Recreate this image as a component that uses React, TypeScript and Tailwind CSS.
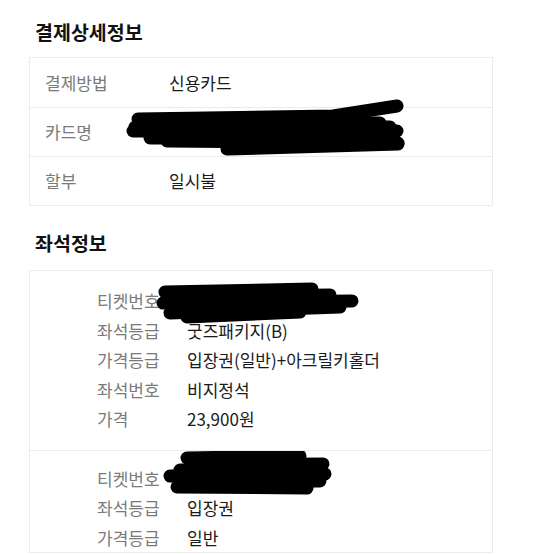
const font = { fontFamily: '"Noto Sans CJK KR", "Noto Sans", sans-serif' }

// 개인정보 가림 낙서 (좌표는 px 그대로)
function Scribble({ lines, className, w, h }: { lines: string[]; className: string; w: number; h: number }) {
  return (
    <svg className={`absolute pointer-events-none ${className}`} width={w} height={h} viewBox={`0 0 ${w} ${h}`}>
      {lines.map((d, i) => (
        <path key={i} d={d} stroke="#000" strokeWidth={13} strokeLinecap="round" strokeLinejoin="round" fill="none" />
      ))}
    </svg>
  )
}

const payRows = [
  { label: '결제방법', value: '신용카드' },
  { label: '카드명', value: '' },
  { label: '할부', value: '일시불' },
]

function TicketRow({ label, value }: { label: string; value: string }) {
  return (
    <div className="flex h-[29.5px] items-center">
      <span className="w-[90px] shrink-0 text-[#7a7a7a]">{label}</span>
      <span className="text-[#1a1a1a]">{value}</span>
    </div>
  )
}

export default function App() {
  return (
    <div className="w-[554px] h-[554px] overflow-hidden bg-white pl-[29px] text-[17px]" style={font}>
      {/* 결제상세정보 */}
      <h2 className="pl-[6px] pt-[18px] text-[19.5px] font-bold leading-[28px] text-[#111]">결제상세정보</h2>
      <div className="mt-[11px] w-[464px] border border-[#ebebeb]">
        {payRows.map((r, i) => (
          <div
            key={r.label}
            className={`relative flex h-[49px] items-center pl-[15px] ${i > 0 ? 'border-t border-[#ebebeb]' : ''}`}
          >
            <span className="w-[124px] shrink-0 text-[#7a7a7a]">{r.label}</span>
            <span className="text-[#1a1a1a]">{r.value}</span>
            {r.label === '카드명' && (
              <Scribble
                className="left-0 top-[-10px]"
                w={464}
                h={62}
                lines={[
                  'M108 21 L303 18 L367 8',
                  'M110 23 L350 25',
                  'M105 29 L360 29',
                  'M103 33 L367 33',
                  'M120 40 L360 40',
                  'M137 43 L368 45',
                  'M197 51 L368 46',
                ]}
              />
            )}
          </div>
        ))}
      </div>

      {/* 좌석정보 */}
      <h2 className="pl-[6px] pt-[23px] text-[19.5px] font-bold leading-[28px] text-[#111]">좌석정보</h2>
      <div className="mt-[13px] w-[464px] border border-[#ebebeb]">
        <div className="relative pl-[67px] pt-[15px] pb-[16px]">
          <TicketRow label="티켓번호" value="" />
          <TicketRow label="좌석등급" value="굿즈패키지(B)" />
          <TicketRow label="가격등급" value="입장권(일반)+아크릴키홀더" />
          <TicketRow label="좌석번호" value="비지정석" />
          <TicketRow label="가격" value="23,900원" />
          <Scribble
            className="left-0 top-0"
            w={464}
            h={56}
            lines={[
              'M135 21 L282 18',
              'M140 26 L300 24',
              'M133 32 L322 30',
              'M145 38 L300 33',
              'M140 42 L310 36',
              'M157 46 L270 41',
            ]}
          />
        </div>
        <div className="relative border-t border-[#ebebeb] pl-[67px] pt-[13px]">
          <TicketRow label="티켓번호" value="" />
          <TicketRow label="좌석등급" value="입장권" />
          <TicketRow label="가격등급" value="일반" />
          <Scribble
            className="left-0 top-0"
            w={464}
            h={46}
            lines={[
              'M157 7 L270 5',
              'M163 14 L293 13',
              'M150 19 L290 18',
              'M140 25 L295 23',
              'M150 30 L290 30',
              'M147 36 L277 37',
            ]}
          />
        </div>
      </div>
    </div>
  )
}
